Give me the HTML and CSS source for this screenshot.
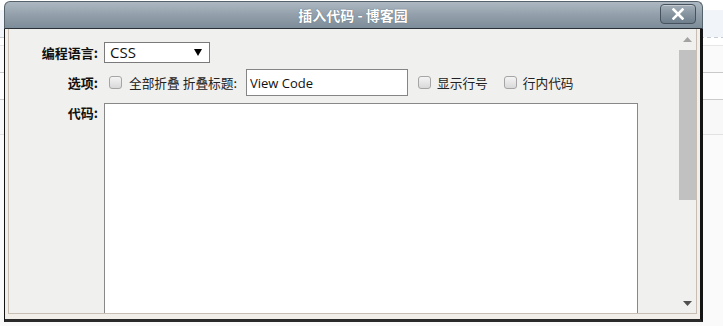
FILE: index.html
```html
<!DOCTYPE html>
<html lang="zh-CN">
<head>
<meta charset="utf-8">
<title>插入代码 - 博客园</title>
<link rel="stylesheet" href="styles.css">
</head>
<body>
<div class="backdrop">
  <div class="bd bd-white1"></div>
  <div class="bd bd-blue"></div>
  <div class="bd bd-dash"></div>
  <div class="bd bd-white2"></div>
  <div class="bd bd-row1"></div>
  <div class="bd bd-row2"></div>
  <div class="bd bd-row3"></div>
  <div class="bd bd-rest"></div>
</div>

<div class="dialog">
  <div class="titlebar">
    <span class="title">插入代码 - 博客园</span>
    <button class="close" type="button" aria-label="关闭">
      <svg width="12" height="12" viewBox="0 0 12 12"><path d="M1.5 1.5 L10.5 10.5 M10.5 1.5 L1.5 10.5" stroke="#fff" stroke-width="2.6" stroke-linecap="square"/></svg>
    </button>
  </div>
  <div class="frame">
    <div class="content">
      <div class="form">
        <label class="lbl">编程语言:</label>
        <div class="ctl">
          <div class="select">
            <span class="select-text">CSS</span>
            <svg class="select-arrow" width="8" height="7" viewBox="0 0 8 7"><path d="M0 0 H8 L4 7 Z" fill="#000"/></svg>
          </div>
        </div>

        <label class="lbl lbl-mid">选项:</label>
        <div class="ctl options">
          <span class="cb"></span><span class="opt opt-first">全部折叠</span>
          <span class="opt opt-title">折叠标题:</span>
          <input class="text-in" type="text" value="View Code">
          <span class="cb cb-2"></span><span class="opt">显示行号</span>
          <span class="cb cb-3"></span><span class="opt">行内代码</span>
        </div>

        <label class="lbl lbl-top">代码:</label>
        <div class="ctl ctl-code">
          <textarea class="code"></textarea>
        </div>
      </div>
      <div class="scrollbar">
        <div class="sb-btn sb-up"><svg width="9" height="5" viewBox="0 0 9 5"><path d="M4.5 0 L9 5 H0 Z" fill="#a3a3a3"/></svg></div>
        <div class="sb-thumb"></div>
        <div class="sb-space"></div>
        <div class="sb-btn sb-down"><svg width="9" height="5" viewBox="0 0 9 5"><path d="M0 0 H9 L4.5 5 Z" fill="#505050"/></svg></div>
      </div>
    </div>
  </div>
</div>
</body>
</html>
```

FILE: styles.css
```css
html, body {
  margin: 0;
  padding: 0;
}
body {
  width: 723px;
  height: 326px;
  overflow: hidden;
  background: #fff;
  position: relative;
  font-family: "Noto Sans CJK SC", "Noto Sans", sans-serif;
}

/* page behind the dialog */
.backdrop {
  display: flex;
  flex-direction: column;
}
.bd { width: 100%; }
.bd-white1 { height: 10px; background: #fff; }
.bd-blue { height: 27px; background: #f1f4f8; }
.bd-dash {
  height: 1px;
  background: repeating-linear-gradient(90deg, #c6ccd4 0 4px, transparent 4px 7px);
}
.bd-white2 { height: 7px; background: #fff; }
.bd-row1 { background: #fafafa; border-top: 1px solid #e6e6e6; border-bottom: 1px solid #c9c9c9; box-sizing: border-box; height: 28px; }
.bd-row2 { height: 26px; background: #fdfdfd; border-bottom: 1px solid #cbcbcb; }
.bd-row3 { height: 34px; background: #f8f8f8; border-bottom: 1px solid #e2e2e2; }
.bd-rest { height: 200px; background: #fafafa; }

/* dialog window */
.dialog {
  position: absolute;
  left: 4px;
  top: 1px;
  width: 699px;
}
.titlebar {
  position: relative;
  height: 26px;
  border: 1px solid #55616b;
  border-bottom-color: #2b3036;
  border-radius: 6px 6px 0 0;
  background: linear-gradient(#adb8c1 0%, #95a2ad 45%, #7d8c99 100%);
  display: flex;
  align-items: center;
  justify-content: center;
}
.title {
  color: #fff;
  font-weight: bold;
  font-size: 14px;
  line-height: 26px;
  text-shadow: 0 0 1px rgba(40, 50, 60, 0.6);
  padding-right: 1px;
}
.close {
  position: absolute;
  right: 6px;
  top: 2px;
  width: 36px;
  height: 20px;
  padding: 0;
  border: 1px solid #46525d;
  border-radius: 4px;
  background: linear-gradient(#a3aeb7 0%, #8795a1 50%, #6f7e8b 100%);
  box-shadow: inset 0 1px 0 rgba(255, 255, 255, 0.35);
  display: flex;
  align-items: center;
  justify-content: center;
}

.frame {
  background: #f2efeb;
  border-left: 1px solid #141414;
  border-right: 3px solid #141414;
  border-bottom: 3px solid #2a2a2a;
  padding: 0 3px 5px 3px;
}
.content {
  height: 284px;
  overflow: hidden;
  background: #f0f0ee;
  border: 1px solid #c9beb3;
  border-top: none;
  display: flex;
}

.form {
  flex: 1;
  display: grid;
  grid-template-columns: 89px 1fr;
  column-gap: 6px;
  row-gap: 6px;
  padding-top: 13px;
  align-content: start;
  align-items: center;
}
.lbl {
  text-align: right;
  font-weight: bold;
  font-size: 13px;
  color: #111;
  line-height: 20px;
}
.lbl-top {
  align-self: start;
  margin-top: 1px;
}
.ctl {
  display: flex;
  align-items: center;
  min-width: 0;
}
.ctl-code {
  align-self: start;
  margin-top: 1px;
}

.select {
  box-sizing: border-box;
  width: 106px;
  height: 21px;
  border: 1px solid #7a7a7a;
  background: #fff;
  display: flex;
  align-items: center;
  justify-content: space-between;
  padding: 0 7px 0 5px;
}
.select-text {
  font-family: "Open Sans", "Noto Sans", sans-serif;
  font-size: 15px;
  color: #111;
  line-height: 19px;
}
.select-arrow { display: block; }

.options {
  height: 27px;
}
.cb {
  box-sizing: border-box;
  width: 13px;
  height: 13px;
  margin-left: 5px;
  border: 1px solid #a5a5a5;
  border-radius: 3px;
  background: linear-gradient(#f4f4f4, #d9d9d9);
  flex: none;
}
.cb-2 { margin-left: 10px; }
.cb-3 { margin-left: 16px; }
.opt {
  font-size: 12.7px;
  color: #222;
  margin-left: 6px;
  white-space: nowrap;
}
.opt-first { margin-left: 7px; }
.opt-title { margin-left: 3px; }
.text-in {
  box-sizing: border-box;
  width: 162px;
  height: 27px;
  margin: 0 0 0 9px;
  border: 1px solid #858585;
  background: #fff;
  padding: 0 3px;
  font-family: "Open Sans", "Noto Sans", sans-serif;
  font-size: 13px;
  color: #111;
  outline: none;
}

.code {
  box-sizing: border-box;
  width: 534px;
  height: 230px;
  margin: 0;
  border: 1px solid #888;
  background: #fff;
  resize: none;
  outline: none;
}

.scrollbar {
  width: 17px;
  flex: none;
  display: flex;
  flex-direction: column;
}
.sb-btn {
  display: flex;
  align-items: center;
  justify-content: center;
}
.sb-btn svg { display: block; }
.sb-up { height: 21px; }
.sb-thumb { height: 150px; background: #c1c1c1; }
.sb-space { flex: 1; }
.sb-down { height: 20px; }
```
